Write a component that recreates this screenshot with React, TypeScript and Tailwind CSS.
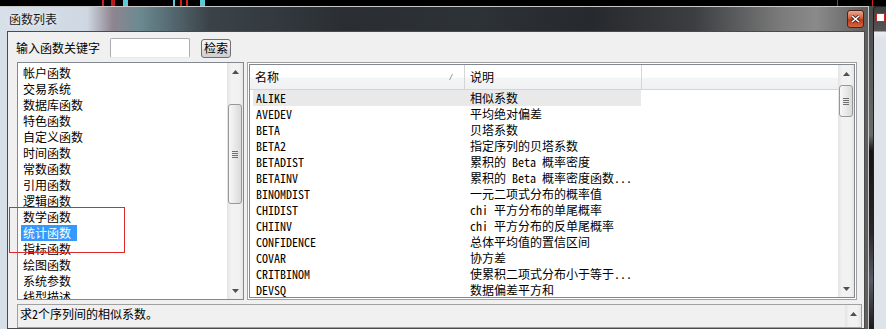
import React from 'react';

const categories = [
  '帐户函数',
  '交易系统',
  '数据库函数',
  '特色函数',
  '自定义函数',
  '时间函数',
  '常数函数',
  '引用函数',
  '逻辑函数',
  '数学函数',
  '统计函数',
  '指标函数',
  '绘图函数',
  '系统参数',
  '线型描述',
];

const functions = [
  { name: 'ALIKE', desc: '相似系数' },
  { name: 'AVEDEV', desc: '平均绝对偏差' },
  { name: 'BETA', desc: '贝塔系数' },
  { name: 'BETA2', desc: '指定序列的贝塔系数' },
  { name: 'BETADIST', desc: '累积的 Beta 概率密度' },
  { name: 'BETAINV', desc: '累积的 Beta 概率密度函数...' },
  { name: 'BINOMDIST', desc: '一元二项式分布的概率值' },
  { name: 'CHIDIST', desc: 'chi 平方分布的单尾概率' },
  { name: 'CHIINV', desc: 'chi 平方分布的反单尾概率' },
  { name: 'CONFIDENCE', desc: '总体平均值的置信区间' },
  { name: 'COVAR', desc: '协方差' },
  { name: 'CRITBINOM', desc: '使累积二项式分布小于等于...' },
  { name: 'DEVSQ', desc: '数据偏差平方和' },
];

const ArrowUp = () => (
  <svg width="7" height="4" viewBox="0 0 7 4">
    <path d="M0 4 L3.5 0 L7 4Z" fill="#505050" />
  </svg>
);

const ArrowDown = () => (
  <svg width="7" height="4" viewBox="0 0 7 4">
    <path d="M0 0 L3.5 4 L7 0Z" fill="#505050" />
  </svg>
);

const Thumb = ({ offset, height }: { offset: string; height: string }) => (
  <div
    className={`${offset} ${height} mx-px rounded-[3px] border border-[#979797] bg-[linear-gradient(90deg,#f7f7f7,#ebebeb_45%,#d9d9d9)] flex items-center justify-center`}
  >
    <div className="flex flex-col gap-px">
      <div className="w-[6px] h-px bg-[#6f6f6f]" />
      <div className="w-[6px] h-px bg-[#6f6f6f]" />
      <div className="w-[6px] h-px bg-[#6f6f6f]" />
      <div className="w-[6px] h-px bg-[#6f6f6f]" />
    </div>
  </div>
);

const ScrollBar = ({ thumb }: { thumb?: React.ReactNode }) => (
  <div className="w-[16px] h-full flex flex-col bg-[linear-gradient(90deg,#e3e3e3,#f2f2f2_25%,#f2f2f2_75%,#e6e6e6)]">
    <div className="h-[17px] shrink-0 flex items-center justify-center">
      <ArrowUp />
    </div>
    <div className="flex-1 min-h-0">{thumb}</div>
    <div className="h-[17px] shrink-0 flex items-center justify-center">
      <ArrowDown />
    </div>
  </div>
);

export default function App() {
  return (
    <div className="w-[886px] h-[329px] overflow-hidden bg-black flex flex-col text-[12px] leading-[16px] text-black font-['Noto_Sans_Mono_CJK_SC','Noto_Sans_CJK_SC',sans-serif]">
      {/* bits of the window behind */}
      <div className="h-[6px] shrink-0 flex">
        <div className="ml-[102px] w-[2px] bg-[#d02020]" />
        <div className="ml-[7px] w-[4px] bg-[#c01818]" />
        <div className="ml-[8px] w-[5px] bg-[#5fc8d8]" />
        <div className="ml-[45px] w-[2px] bg-[#5fc8d8]" />
        <div className="ml-[5px] w-[8px] border-x-2 border-[#d02020]" />
        <div className="ml-[12px] w-[5px] bg-[#5fc8d8]" />
        <div className="ml-[632px] w-px bg-[#d02020]" />
        <div className="ml-[34px] w-px bg-[#d02020]" />
      </div>

      <div className="flex flex-1 min-h-0">
        {/* dialog window */}
        <div className="w-[869px] flex flex-col border-t border-r border-[#c8c8c8] bg-[linear-gradient(90deg,#d7dfe9_0%,#cfd8e2_10%,#8e8590_13%,#6c8a92_16%,#3b4349_24%,#2a2e33_40%,#2d3237_55%,#26292d_68%,#3c3e41_80%,#7b7b7b_90%,#8a8a8a_94%,#5e5e5e_100%)]">
          {/* title bar */}
          <div className="h-[24px] shrink-0 flex items-center justify-between pl-[9px] pr-[4px]">
            <span className="text-[#1a1a1a] [text-shadow:0_0_6px_#ffffff]">函数列表</span>
            <div className="w-[17px] h-[18px] rounded-[3px] border border-[#4b2418] bg-[linear-gradient(180deg,#eaa890,#d2603f_45%,#b8371b_55%,#d8673c)] flex items-center justify-center">
              <svg width="9" height="8" viewBox="0 0 9 8">
                <path d="M1 1 L8 7 M8 1 L1 7" stroke="#3a1a10" strokeWidth="3" />
                <path d="M1 1 L8 7 M8 1 L1 7" stroke="#ffffff" strokeWidth="1.6" />
              </svg>
            </div>
          </div>

          {/* client area */}
          <div className="flex-1 min-h-0 ml-[7px] mr-[3px] border border-[#4a4a4a] bg-[#f0f0f0] flex flex-col overflow-hidden">
            <div className="mt-[6px] h-[20px] shrink-0 flex items-center pl-[8px]">
              <span>输入函数关键字</span>
              <div className="ml-[10px] w-[80px] h-[20px] rounded-[2px] border border-[#abadb3] border-b-[#e3e9ef] bg-white" />
              <div className="ml-[11px] w-[30px] h-[19px] rounded-[3px] border border-[#707070] bg-[linear-gradient(180deg,#f2f2f2,#ebebeb_50%,#dddddd_51%,#cfcfcf)] flex items-center justify-center">
                检索
              </div>
            </div>

            <div className="mt-[4px] ml-[9px] flex gap-[3px] shrink-0">
              {/* category list */}
              <div className="relative w-[227px] h-[238px] border border-[#828790] bg-white flex">
                <div className="flex-1 pt-[2px] pl-[5px] overflow-hidden">
                  {categories.map((c, i) => (
                    <div key={c} className="h-[16px] flex">
                      <span
                        className={
                          i === 10
                            ? 'pl-[2px] pr-[6px] -ml-[2px] bg-[#3399ff] text-white'
                            : ''
                        }
                      >
                        {c}
                      </span>
                    </div>
                  ))}
                </div>
                <ScrollBar thumb={<Thumb offset="mt-[24px]" height="h-[100px]" />} />
              </div>

              {/* function list */}
              <div className="w-[610px] h-[238px] border border-[#a0a0a0] p-px bg-white">
                <div className="h-full border border-[#828790] flex">
                  <div className="flex-1 flex flex-col overflow-hidden">
                    <div className="h-[25px] shrink-0 flex border-b border-[#d5d5d5] bg-[linear-gradient(180deg,#ffffff_0%,#ffffff_50%,#f4f5f7_55%,#eef0f2_100%)]">
                      <div className="w-[215px] border-r border-[#d5d5d5] pl-[5px] flex items-center justify-between pr-[11px]">
                        <span>名称</span>
                        <svg width="4" height="6" viewBox="0 0 4 6">
                          <path d="M0.5 6 L3.5 0" stroke="#9a9a9a" strokeWidth="1" />
                        </svg>
                      </div>
                      <div className="w-[177px] border-r border-[#d5d5d5] pl-[5px] flex items-center">
                        说明
                      </div>
                    </div>
                    {functions.map((f, i) => (
                      <div
                        key={f.name}
                        className={`ml-[3px] w-[388px] h-[16px] shrink-0 flex ${i === 0 ? 'bg-[#e9e9e9]' : ''}`}
                      >
                        <span className="w-[211px] pl-[3px]">{f.name}</span>
                        <span className="w-[177px] pl-[6px] whitespace-nowrap">{f.desc}</span>
                      </div>
                    ))}
                  </div>
                  <ScrollBar thumb={<Thumb offset="mt-[3px]" height="h-[32px]" />} />
                </div>
              </div>
            </div>

            {/* description box */}
            <div className="mt-[4px] ml-[9px] w-[845px] flex-1 border border-[#a0a0a0] bg-[#f0f0f0] flex">
              <div className="flex-1 pl-[2px] pt-px">求2个序列间的相似系数。</div>
              <div className="w-[16px] flex flex-col bg-[linear-gradient(90deg,#e3e3e3,#f2f2f2_25%,#f2f2f2_75%,#e6e6e6)]">
                <div className="h-[17px] flex items-center justify-center">
                  <ArrowUp />
                </div>
              </div>
            </div>
          </div>
        </div>

        {/* neighbouring window on the right */}
        <div className="flex-1 flex bg-[linear-gradient(180deg,#4a4a4a_0%,#6a6a6a_40%,#151313_45%,#2a2628_70%,#5a5a66_85%,#1a1818_100%)]">
          <div className="ml-[4px] flex-1 rounded-tl-[4px] border-l border-t border-[#202020] bg-[linear-gradient(180deg,#3e3e3e_0px,#555555_24px,#ededed_25px,#dfe4ea_32px,#dfe4ea_100%)] flex flex-col">
            <div className="mt-[6px] ml-[2px] w-[9px] h-[9px] border border-[#d02020] bg-white" />
          </div>
        </div>
      </div>

      {/* highlight frame drawn over the list */}
      <div className="pointer-events-none absolute left-[9px] top-[207px] w-[116px] h-[46px] border border-[#e02a2a]" />
    </div>
  );
}
